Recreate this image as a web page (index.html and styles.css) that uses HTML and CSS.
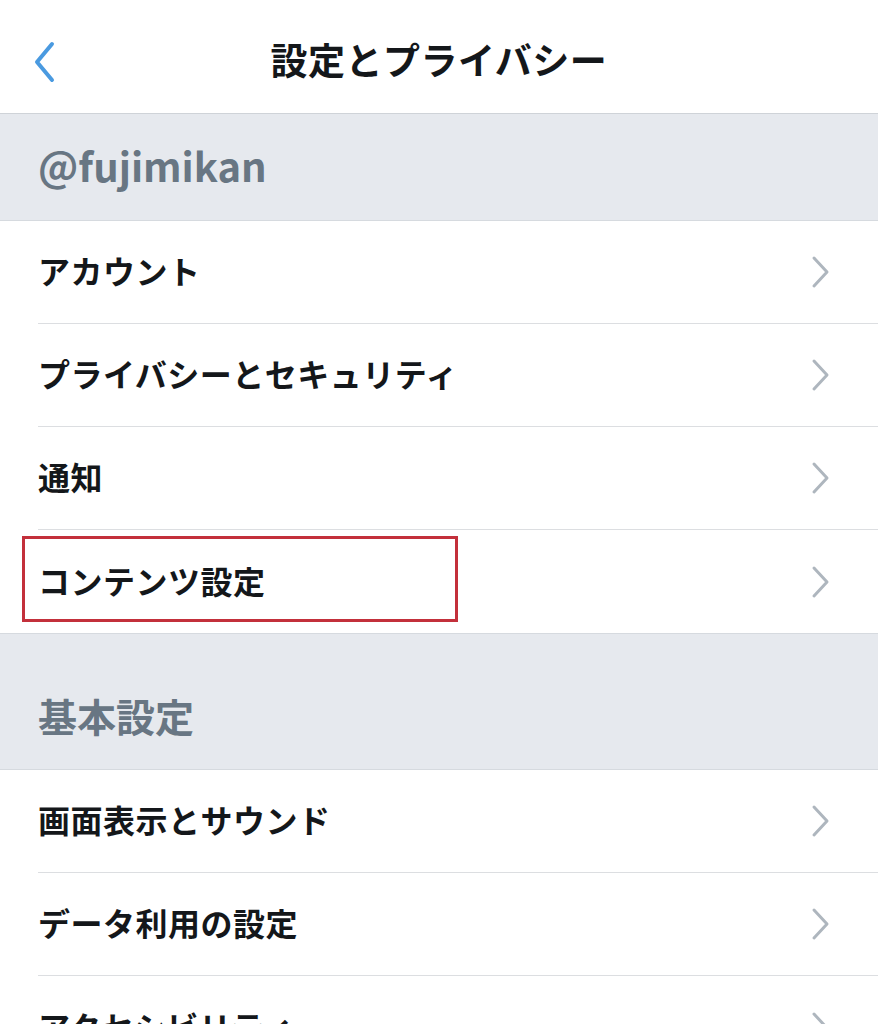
FILE: index.html
```html
<!DOCTYPE html>
<html lang="ja">
<head>
  <meta charset="UTF-8" />
  <title>設定とプライバシー</title>
  <link rel="stylesheet" href="styles.css">
</head>
<body>
  <div class="tela">
    <header class="topo">
      <svg class="voltar" width="26" height="42" viewBox="0 0 26 42">
        <path d="M20 3 L5 21 L20 39" fill="none" stroke="#4a9ae0" stroke-width="4" stroke-linecap="round" stroke-linejoin="round"/>
      </svg>
      <h1>設定とプライバシー</h1>
    </header>

    <div class="secao">@fujimikan</div>
    <ul class="lista">
      <li class="item">アカウント
        <svg class="seta" width="20" height="34" viewBox="0 0 20 34"><path d="M3 3 L16 17 L3 31"/></svg>
      </li>
      <li class="item">プライバシーとセキュリティ
        <svg class="seta" width="20" height="34" viewBox="0 0 20 34"><path d="M3 3 L16 17 L3 31"/></svg>
      </li>
      <li class="item">通知
        <svg class="seta" width="20" height="34" viewBox="0 0 20 34"><path d="M3 3 L16 17 L3 31"/></svg>
      </li>
      <li class="item marcado">コンテンツ設定
        <svg class="seta" width="20" height="34" viewBox="0 0 20 34"><path d="M3 3 L16 17 L3 31"/></svg>
      </li>
    </ul>

    <div class="secao alta">基本設定</div>
    <ul class="lista">
      <li class="item">画面表示とサウンド
        <svg class="seta" width="20" height="34" viewBox="0 0 20 34"><path d="M3 3 L16 17 L3 31"/></svg>
      </li>
      <li class="item">データ利用の設定
        <svg class="seta" width="20" height="34" viewBox="0 0 20 34"><path d="M3 3 L16 17 L3 31"/></svg>
      </li>
      <li class="item">アクセシビリティ
        <svg class="seta" width="20" height="34" viewBox="0 0 20 34"><path d="M3 3 L16 17 L3 31"/></svg>
      </li>
    </ul>
  </div>
</body>
</html>
```

FILE: styles.css
```css
body {
  margin: 0;
  background-color: #fff;
  font-family: "Noto Sans CJK JP", "Noto Sans", sans-serif;
  color: #14171a;
}

.tela {
  width: 878px;
  height: 1024px;
  overflow: hidden;
}

.topo {
  position: relative;
  height: 113px;
  display: flex;
  align-items: center;
  justify-content: center;
  border-bottom: 1px solid #cfd3d8;
}

.voltar {
  position: absolute;
  left: 32px;
  top: 41px;
}

.topo h1 {
  margin: 0;
  padding-top: 6px;
  font-size: 37px;
  line-height: 1;
  font-weight: 700;
  letter-spacing: 0.5px;
}

.secao {
  height: 107px;
  box-sizing: border-box;
  padding: 0 38px 4px;
  display: flex;
  align-items: center;
  background-color: #e6e9ee;
  color: #687683;
  font-size: 40px;
  line-height: 1;
  font-weight: 700;
  border-bottom: 1px solid #d6dadf;
}

.secao.alta {
  height: 137px;
  padding-top: 28px;
  padding-bottom: 0;
  font-size: 39px;
  border-top: 1px solid #d6dadf;
}

.lista {
  list-style: none;
  margin: 0;
  padding: 0 0 0 38px;
}

.item {
  position: relative;
  height: 103px;
  box-sizing: border-box;
  padding-bottom: 4px;
  display: flex;
  align-items: center;
  justify-content: space-between;
  font-size: 32px;
  line-height: 1;
  letter-spacing: 0.5px;
  font-weight: 700;
  border-bottom: 1px solid #dcdee1;
}

.lista .item:last-child {
  border-bottom: none;
}

.seta {
  margin-right: 47px;
  margin-top: 4px;
}

.seta path {
  fill: none;
  stroke: #aeb6be;
  stroke-width: 3;
  stroke-linecap: round;
  stroke-linejoin: round;
}

.marcado::after {
  content: "";
  position: absolute;
  left: -16px;
  top: 6px;
  width: 436px;
  height: 86px;
  border: 3px solid #c3303b;
  box-sizing: border-box;
}
```
